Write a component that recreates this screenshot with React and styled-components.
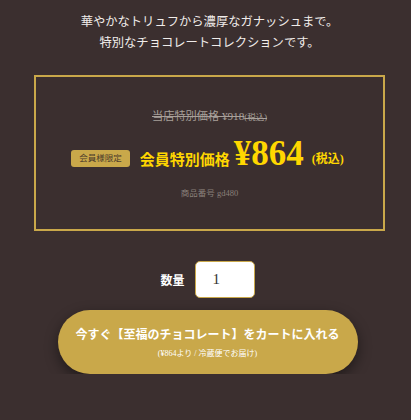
import React from 'react';
import styled, { createGlobalStyle } from 'styled-components';

const GlobalStyle = createGlobalStyle`
  html, body {
    margin: 0;
    padding: 0;
    background: #3b2f2f;
  }
  body {
    font-family: "Liberation Serif", "Noto Sans CJK JP", serif;
    color: #f0ecea;
  }
`;

const Page = styled.div`
  display: flex;
  flex-direction: column;
  align-items: center;
  padding: 12px 26px 0 34px;
  width: 411px;
  box-sizing: border-box;
`;

const Lead = styled.p`
  margin: 0;
  font-size: 12.3px;
  line-height: 21px;
  text-align: center;
  color: #f0ecea;
`;

const PriceBox = styled.div`
  margin-top: 21px;
  align-self: stretch;
  border: 2px solid #c9a84a;
  height: 156px;
  box-sizing: border-box;
  display: flex;
  flex-direction: column;
  align-items: center;
  padding-top: 32px;
`;

const OldPrice = styled.div`
  font-size: 11.2px;
  color: #a8a09a;
  text-decoration: line-through;
  line-height: 14px;
`;

const Small = styled.span`
  font-size: 8.5px;
`;

const PriceRow = styled.div`
  display: flex;
  align-items: center;
  margin-top: 18px;
  margin-left: -4px;
`;

const Badge = styled.span`
  background: #c9a84a;
  color: #4a3a2a;
  font-size: 8.5px;
  border-radius: 3px;
  padding: 2px 8px;
  line-height: 13px;
  margin-right: 10px;
`;

const MemberLabel = styled.span`
  font-size: 15px;
  font-weight: bold;
  color: #ffd700;
  margin-right: 4px;
`;

const BigPrice = styled.span`
  font-size: 35px;
  font-weight: bold;
  color: #ffd700;
  line-height: 40px;
  margin-top: -8px;
`;

const Tax = styled.span`
  font-size: 12px;
  font-weight: bold;
  color: #ffd700;
  margin-left: 8px;
`;

const Code = styled.div`
  margin-top: 12px;
  font-size: 8.5px;
  color: #8a807a;
`;

const QtyRow = styled.div`
  display: flex;
  align-items: center;
  gap: 10px;
  margin-top: 30px;
  margin-left: -4px;
`;

const QtyLabel = styled.span`
  font-size: 12px;
  font-weight: bold;
  color: #ffffff;
`;

const QtyInput = styled.input`
  width: 60px;
  height: 37px;
  box-sizing: border-box;
  border: 1px solid #c9a84a;
  border-radius: 5px;
  background: #ffffff;
  font-family: "Liberation Serif", serif;
  font-size: 15px;
  color: #333;
  padding: 0 0 0 17px;
  outline: none;
`;

const CartButton = styled.button`
  margin-top: 12px;
  margin-left: -4px;
  width: 300px;
  height: 64px;
  border: none;
  border-radius: 32px;
  background: #c9a84a;
  box-shadow: 0 5px 14px rgba(0, 0, 0, 0.45);
  display: flex;
  flex-direction: column;
  align-items: center;
  justify-content: center;
  font-family: inherit;
  cursor: pointer;
  padding: 0;
`;

const ButtonMain = styled.span`
  font-size: 12px;
  font-weight: bold;
  color: #ffffff;
  line-height: 17px;
`;

const ButtonSub = styled.span`
  font-size: 8px;
  color: #ffffff;
  margin-top: 3px;
`;

export default function App() {
  return (
    <>
      <GlobalStyle />
      <Page>
        <Lead>
          華やかなトリュフから濃厚なガナッシュまで。
          <br />
          特別なチョコレートコレクションです。
        </Lead>
        <PriceBox>
          <OldPrice>
            当店特別価格 ¥918<Small>(税込)</Small>
          </OldPrice>
          <PriceRow>
            <Badge>会員様限定</Badge>
            <MemberLabel>会員特別価格</MemberLabel>
            <BigPrice>¥864</BigPrice>
            <Tax>(税込)</Tax>
          </PriceRow>
          <Code>商品番号 gd480</Code>
        </PriceBox>
        <QtyRow>
          <QtyLabel>数量</QtyLabel>
          <QtyInput type="number" defaultValue={1} />
        </QtyRow>
        <CartButton>
          <ButtonMain>今すぐ【至福のチョコレート】をカートに入れる</ButtonMain>
          <ButtonSub>(¥864より / 冷蔵便でお届け)</ButtonSub>
        </CartButton>
      </Page>
    </>
  );
}
